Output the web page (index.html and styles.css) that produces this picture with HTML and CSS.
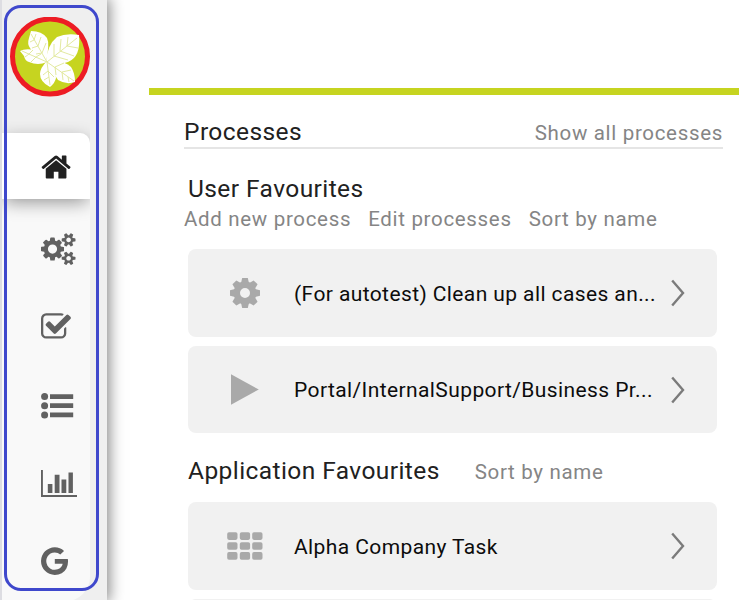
FILE: index.html
```html
<!DOCTYPE html>
<html lang="en">
<head>
<meta charset="utf-8">
<title>Processes</title>
<link rel="stylesheet" href="styles.css">
</head>
<body>
<div class="app">
  <aside class="sidebar">
    <div class="logo">
      <svg viewBox="10 17 80 80" width="80" height="80">
        <circle cx="50" cy="56.6" r="37.5" fill="#c6d420" stroke="#ed1c24" stroke-width="5"/>
        <g fill="#fff">
          <path d="M31 31Q42 31 47 38Q50 44 46 62Q34 56 30 48Q27 44 29 38Z"/>
          <path d="M79 35Q81 57 68 62Q60 65 46 62Q47 45 57 37Q66 33 79 35Z"/>
          <path d="M20 51Q25 48 35 50Q44 55 47 62Q38 66 29 62Q25 61 24 56Z"/>
          <path d="M47 61Q56 69 56 78Q55 83 50 87Q40 82 40 74Q40 68 47 61Z"/>
          <path d="M47 62Q63 59 71 67Q75 73 75 82Q66 85 58 80Q54 74 47 62Z"/>
        </g>
        <g fill="none" stroke="#dfe795" stroke-width=".9">
          <path d="M47 62L31 34M47 62L77 38M47 62L22 51M47 62L50 85M47 62L74 81"/>
          <path d="M34 40L30 42M34 40L36 34M38 46L32 48M38 46L41 37M42 53L36 54M42 53L46 43"/>
          <path d="M54 56L54 44M54 56L68 60M60 51L61 39M60 51L74 56M67 46L68 37M67 46L78 48"/>
          <path d="M29 54L25 57M29 54L33 50M36 57L31 62M36 57L41 54M48 71L43 75M48 71L54 77M49 77L44 80"/>
          <path d="M55 67L56 75M55 67L64 63M62 72L63 80M62 72L71 70M68 77L69 82"/>
        </g>
      </svg>
    </div>
    <nav class="menu">
      <a class="item active">
        <svg class="fa" viewBox="0 0 1792 1792"><path d="M1472 992v480q0 26-19 45t-45 19h-384v-384h-256v384h-384q-26 0-45-19t-19-45v-480q0-1 .5-3t.5-3l575-474 575 474q1 2 1 6zm223-69l-62 74q-8 9-21 11h-3q-13 0-21-7l-692-577-692 577q-12 8-24 7-13-2-21-11l-62-74q-8-10-7-23.5t11-21.5l719-599q32-26 76-26t76 26l244 204v-195q0-14 9-23t23-9h192q14 0 23 9t9 23v408l219 182q10 8 11 21.5t-7 23.5z"/></svg>
      </a>
      <a class="item first">
        <svg class="fa wide" viewBox="0 0 1920 1792"><path d="M896 896q0-106-75-181t-181-75-181 75-75 181 75 181 181 75 181-75 75-181zm768 512q0-52-38-90t-90-38-90 38-38 90q0 53 37.5 90.5t90.5 37.5 90.5-37.5 37.5-90.5zm0-1024q0-52-38-90t-90-38-90 38-38 90q0 53 37.5 90.5t90.5 37.5 90.5-37.5 37.5-90.5zm-384 421v185q0 10-7 19.5t-16 10.5l-155 24q-11 35-32 76 34 48 90 115 7 11 7 20 0 12-7 19-23 30-82.5 89.5t-78.5 59.5q-11 0-21-7l-115-90q-37 19-77 31-11 108-23 155-7 24-30 24h-186q-11 0-20-7.5t-10-17.5l-23-153q-34-10-75-31l-118 89q-7 7-20 7-11 0-21-8-144-133-144-160 0-9 7-19 10-14 41-53t47-61q-23-44-35-82l-152-24q-10-1-17-9.5t-7-19.5v-185q0-10 7-19.5t16-10.5l155-24q11-35 32-76-34-48-90-115-7-11-7-20 0-12 7-20 22-30 82-89t79-59q11 0 21 7l115 90q34-18 77-32 11-108 23-154 7-24 30-24h186q11 0 20 7.5t10 17.5l23 153q34 10 75 31l118-89q8-7 20-7 11 0 21 8 144 133 144 160 0 8-7 19-12 16-42 54t-45 60q23 48 34 82l152 23q10 2 17 10.5t7 19.5zm640 533v140q0 16-149 31-12 27-30 52 51 113 51 138 0 4-4 7-122 71-124 71-8 0-46-47t-52-68q-20 2-30 2t-30-2q-14 21-52 68t-46 47q-2 0-124-71-4-3-4-7 0-25 51-138-18-25-30-52-149-15-149-31v-140q0-16 149-31 13-29 30-52-51-113-51-138 0-4 4-7 4-2 35-20t59-34 30-16q8 0 46 46.5t52 67.5q20-2 30-2t30 2q51-71 92-112l6-2q4 0 124 70 4 3 4 7 0 25-51 138 17 23 30 52 149 15 149 31zm0-1024v140q0 16-149 31-12 27-30 52 51 113 51 138 0 4-4 7-122 71-124 71-8 0-46-47t-52-68q-20 2-30 2t-30-2q-14 21-52 68t-46 47q-2 0-124-71-4-3-4-7 0-25 51-138-18-25-30-52-149-15-149-31v-140q0-16 149-31 13-29 30-52-51-113-51-138 0-4 4-7 4-2 35-20t59-34 30-16q8 0 46 46.5t52 67.5q20-2 30-2t30 2q51-71 92-112l6-2q4 0 124 70 4 3 4 7 0 25-51 138 17 23 30 52 149 15 149 31z"/></svg>
      </a>
      <a class="item">
        <svg class="fa" viewBox="64 0 1792 1792"><path d="M1472 930v318q0 119-84.5 203.5t-203.5 84.5h-832q-119 0-203.5-84.5t-84.5-203.5v-832q0-119 84.5-203.5t203.5-84.5h832q63 0 117 25 15 7 18 23 3 17-9 29l-49 49q-10 10-23 10-3 0-9-2-23-6-45-6h-832q-66 0-113 47t-47 113v832q0 66 47 113t113 47h832q66 0 113-47t47-113v-254q0-13 9-22l64-64q10-10 23-10 6 0 12 3 20 8 20 29zm231-489l-814 814q-24 24-57 24t-57-24l-430-430q-24-24-24-57t24-57l110-110q24-24 57-24t57 24l263 263 647-647q24-24 57-24t57 24l110 110q24 24 24 57t-24 57z"/></svg>
      </a>
      <a class="item lower">
        <svg width="34" height="26" viewBox="0 0 34 26"><circle cx="3.6" cy="3.6" r="3.5"/><circle cx="3.6" cy="12.8" r="3.5"/><circle cx="3.6" cy="22" r="3.5"/><path d="M9 1.2h23.2V6H9zM9 10.3h23.2v4.8H9zM9 19.4h23.2v4.8H9z"/></svg>
      </a>
      <a class="item lower">
        <svg width="37" height="28" viewBox="0 0 37 28"><path d="M0 0h1.9v25H36v2H0zM6.8 14h4.6v9H6.8zM13.7 4.8h4.8V23h-4.8zM20.5 9.5h4.8V23h-4.8zM27.5 2.5h4.4V23h-4.4z"/></svg>
      </a>
      <a class="item">
        <svg class="fa" viewBox="128 0 1792 1792"><path d="M896 786h725q12 67 12 128 0 217-91 387.5t-259.5 266.5-386.5 96q-157 0-299-60.5t-245-163.5-163.5-245-60.5-299 60.5-299 163.5-245 245-163.5 299-60.5q300 0 515 201l-209 201q-123-119-306-119-129 0-238.5 65t-173.5 176.5-64 243.5 64 243.5 173.5 176.5 238.5 65q87 0 160-24t120-60 82-82 51.5-87 22.5-78h-436v-264z"/></svg>
      </a>
    </nav>
    <div class="outline"></div>
  </aside>
  <main class="content">
    <div class="accent"></div>
    <header class="head">
      <h1>Processes</h1>
      <a class="link">Show all processes</a>
    </header>
    <section class="group user">
      <h2>User Favourites</h2>
      <div class="actions">
        <a class="link">Add new process</a><a class="link">Edit processes</a><a class="link">Sort by name</a>
      </div>
      <div class="card">
        <span class="icon"><svg width="30" height="30" viewBox="-15 -15 30 30"><defs><path id="tooth" d="M-4-10L-2.8-15H2.8L4-10z"/></defs><circle r="8.2" fill="none" stroke="#a9a9a9" stroke-width="6.4"/><use href="#tooth"/><use href="#tooth" transform="rotate(45)"/><use href="#tooth" transform="rotate(90)"/><use href="#tooth" transform="rotate(135)"/><use href="#tooth" transform="rotate(180)"/><use href="#tooth" transform="rotate(225)"/><use href="#tooth" transform="rotate(270)"/><use href="#tooth" transform="rotate(315)"/></svg></span>
        <span class="name">(For autotest) Clean up all cases an...</span>
        <svg class="chev" width="14" height="28" viewBox="0 0 14 28"><path d="M1.2 1.5L12 14L1.2 26.5"/></svg>
      </div>
      <div class="card second">
        <span class="icon"><svg width="28" height="31" viewBox="0 0 28 31"><path d="M0 .3L27.8 15.5L0 30.7z"/></svg></span>
        <span class="name">Portal/InternalSupport/Business Pr...</span>
        <svg class="chev" width="14" height="28" viewBox="0 0 14 28"><path d="M1.2 1.5L12 14L1.2 26.5"/></svg>
      </div>
    </section>
    <section class="group apps">
      <div class="title-row">
        <h2>Application Favourites</h2>
        <a class="link">Sort by name</a>
      </div>
      <div class="card">
        <span class="icon"><svg width="36" height="28" viewBox="0 0 36 28"><g id="row"><rect x=".2" y=".3" width="10.3" height="7.6" rx="1.8"/><rect x="12.8" y=".3" width="10.3" height="7.6" rx="1.8"/><rect x="25.2" y=".3" width="10.3" height="7.6" rx="1.8"/></g><use href="#row" y="9.9"/><use href="#row" y="19.8"/></svg></span>
        <span class="name">Alpha Company Task</span>
        <svg class="chev" width="14" height="28" viewBox="0 0 14 28"><path d="M1.2 1.5L12 14L1.2 26.5"/></svg>
      </div>
      <div class="card next"></div>
    </section>
  </main>
</div>
</body>
</html>
```
FILE: styles.css
```css
* { box-sizing: border-box; }
body { margin: 0; font-family: Roboto, sans-serif; background: #fff; overflow: hidden; }
h1, h2 { margin: 0; font-size: 24.5px; font-weight: 400; line-height: 30px; color: #212121; letter-spacing: .42px; white-space: nowrap; }
svg { display: block; flex: none; }
.app { display: flex; width: 739px; height: 600px; overflow: hidden; }

.sidebar { position: relative; flex: none; width: 107px; height: 600px; background: #efefef; border-left: 2px solid #dddde2; box-shadow: 0 0 14px 2px rgba(0, 0, 0, .5); }
.logo { padding: 17px 0 0 8px; height: 133px; }
.menu { width: 88px; height: 468px; background: #f9f9f9; border-radius: 0 10px 24px 0; }
.item { display: flex; align-items: center; height: 78px; padding-left: 39px; fill: #616161; }
.item.active { height: 66px; padding-left: 38px; background: #fff; border-radius: 0 10px 0 0; fill: #212121; box-shadow: 0 5px 18px -2px rgba(0, 0, 0, .42); clip-path: inset(-12px 0 -40px 0); }
.item.active svg { margin-top: 2px; }
.item.first { margin-top: 11px; }
.item.lower svg { margin-top: 2px; }
.fa { width: 32.2px; height: 32.2px; }
.fa.wide { width: 34.5px; }
.outline { position: absolute; left: 2px; top: 5px; width: 95px; height: 586px; border: 3px solid #3f48cc; border-radius: 17px; }

.content { flex: 1; padding: 88px 0 0 42px; }
.accent { height: 7px; background: #c6d420; }
.head { display: flex; justify-content: space-between; align-items: flex-end; width: 539px; height: 54px; margin-left: 35px; border-bottom: 2px solid #e5e5e5; }
.link { font-size: 20.5px; line-height: 26px; color: #858585; letter-spacing: .68px; white-space: nowrap; }
.head .link { margin-bottom: 1px; }
.group { width: 529px; margin-left: 39px; }
.user { padding-top: 25px; }
.actions { display: flex; gap: 17px; margin: 2px 0 17px -4px; }
.card { display: flex; align-items: center; height: 88px; background: #f1f1f1; border-radius: 8px; }
.card.second { height: 87px; margin-top: 9px; }
.card.next { margin-top: 9px; }
.icon { display: flex; justify-content: center; width: 113px; margin-right: -7px; fill: #a9a9a9; }
.name { width: 377px; padding-top: 1px; font-size: 21px; line-height: 28px; color: #0c0c0c; letter-spacing: .4px; white-space: nowrap; }
.chev { fill: none; stroke: #7b7b7b; stroke-width: 2.4; }
.title-row { display: flex; align-items: center; gap: 35px; margin-top: 23px; margin-bottom: 16px; }
.title-row .link { margin-top: 2px; }
```
